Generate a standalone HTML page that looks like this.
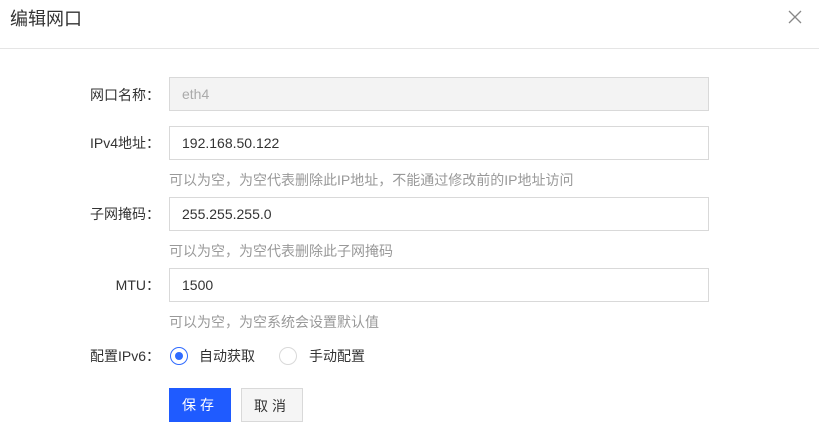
<html><head><style>
body{margin:0;width:819px;height:427px;background:#fff;font-family:"Liberation Sans","Noto Sans CJK SC",sans-serif;color:#333;position:relative;overflow:hidden}
.t{position:absolute;left:10px;top:5px;font-size:18px;color:#333}
.x{position:absolute;left:787px;top:9px;width:16px;height:16px}
.hr{position:absolute;left:0;top:48px;width:819px;height:1px;background:#e5e5e5}
.l{position:absolute;right:659px;font-size:14px;color:#333;line-height:20px}
.i{position:absolute;left:169px;font-size:14px;line-height:32px;padding-left:12px;box-sizing:border-box;width:540px;height:34px;color:#333;border:1px solid #d9d9d9}
.h{position:absolute;left:169px;font-size:14px;color:#999;line-height:20px}
.r{position:absolute;width:18px;height:18px;border-radius:50%;box-sizing:border-box;border:1px solid #d9d9d9}
.b{position:absolute;top:388px;height:34px;line-height:34px;text-align:center;font-size:14px;letter-spacing:4px;box-sizing:border-box}
</style></head><body>
<div class="t">编辑网口</div>
<svg class="x" viewBox="0 0 16 16"><path d="M2 2L14 14M14 2L2 14" stroke="#888" stroke-width="1.3"/></svg>
<div class="hr"></div>
<div class="l" style="top:85px">网口名称：</div>
<div class="i" style="top:77px;background:#f3f3f3;color:#aaa">eth4</div>
<div class="l" style="top:133px">IPv4地址：</div>
<div class="i" style="top:126px">192.168.50.122</div>
<div class="h" style="top:170px">可以为空，为空代表删除此IP地址，不能通过修改前的IP地址访问</div>
<div class="l" style="top:204px">子网掩码：</div>
<div class="i" style="top:197px">255.255.255.0</div>
<div class="h" style="top:241px">可以为空，为空代表删除此子网掩码</div>
<div class="l" style="top:275px">MTU：</div>
<div class="i" style="top:268px">1500</div>
<div class="h" style="top:312px">可以为空，为空系统会设置默认值</div>
<div class="l" style="top:346px">配置IPv6：</div>
<div class="r" style="left:170px;top:347px;border:1px solid #2f6bff"><div style="position:absolute;left:4px;top:4px;width:8px;height:8px;border-radius:50%;background:#2f6bff"></div></div>
<div style="position:absolute;left:199px;top:346px;font-size:14px;line-height:20px">自动获取</div>
<div class="r" style="left:279px;top:347px"></div>
<div style="position:absolute;left:309px;top:346px;font-size:14px;line-height:20px">手动配置</div>
<div class="b" style="left:169px;width:62px;background:#1f5bff;color:#fff">保存</div>
<div class="b" style="left:241px;width:62px;background:#f5f5f5;border:1px solid #d9d9d9;color:#333">取消</div>
</body></html>
